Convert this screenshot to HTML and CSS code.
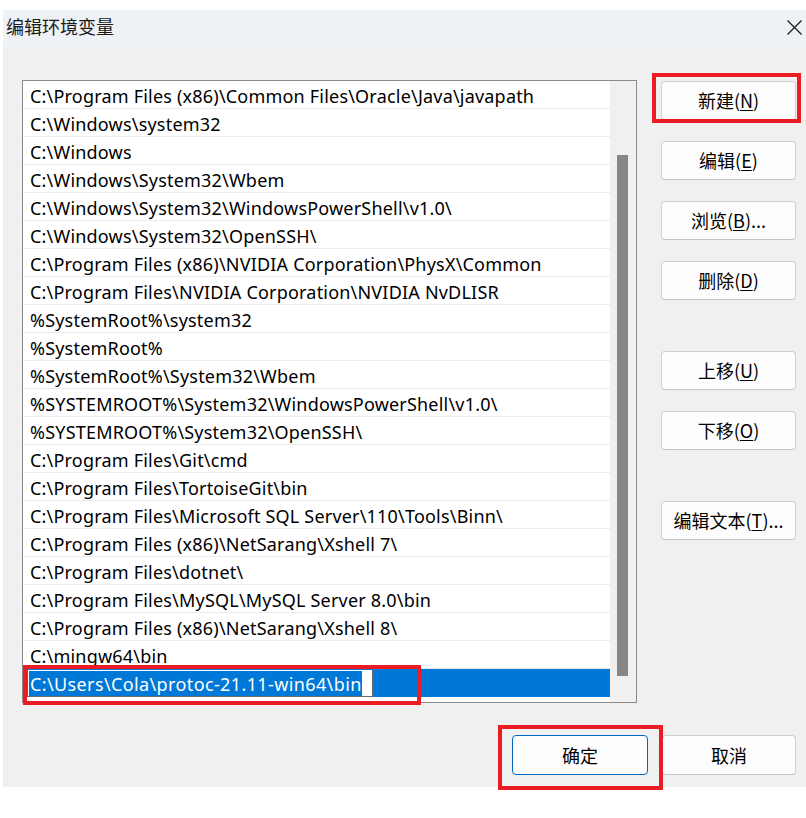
FILE: index.html
```html
<!DOCTYPE html>
<html lang="zh-CN">
<head>
<meta charset="utf-8">
<title>编辑环境变量</title>
<link rel="stylesheet" href="styles.css">
</head>
<body>
<div class="dialog">
  <div class="titlebar">
    <span class="title">编辑环境变量</span>
    <svg class="close" width="15" height="15" viewBox="0 0 15 15"><path d="M0.5 0.5 L14.5 14.5 M14.5 0.5 L0.5 14.5" stroke="#1a1a1a" stroke-width="1.3" fill="none"/></svg>
  </div>
  <div class="content">
    <div class="listbox">
      <div class="rows">
        <div class="row">C:\Program Files (x86)\Common Files\Oracle\Java\javapath</div>
        <div class="row">C:\Windows\system32</div>
        <div class="row">C:\Windows</div>
        <div class="row">C:\Windows\System32\Wbem</div>
        <div class="row">C:\Windows\System32\WindowsPowerShell\v1.0\</div>
        <div class="row">C:\Windows\System32\OpenSSH\</div>
        <div class="row">C:\Program Files (x86)\NVIDIA Corporation\PhysX\Common</div>
        <div class="row">C:\Program Files\NVIDIA Corporation\NVIDIA NvDLISR</div>
        <div class="row">%SystemRoot%\system32</div>
        <div class="row">%SystemRoot%</div>
        <div class="row">%SystemRoot%\System32\Wbem</div>
        <div class="row">%SYSTEMROOT%\System32\WindowsPowerShell\v1.0\</div>
        <div class="row">%SYSTEMROOT%\System32\OpenSSH\</div>
        <div class="row">C:\Program Files\Git\cmd</div>
        <div class="row">C:\Program Files\TortoiseGit\bin</div>
        <div class="row">C:\Program Files\Microsoft SQL Server\110\Tools\Binn\</div>
        <div class="row">C:\Program Files (x86)\NetSarang\Xshell 7\</div>
        <div class="row">C:\Program Files\dotnet\</div>
        <div class="row">C:\Program Files\MySQL\MySQL Server 8.0\bin</div>
        <div class="row">C:\Program Files (x86)\NetSarang\Xshell 8\</div>
        <div class="row">C:\mingw64\bin</div>
        <div class="row selected"><div class="edit"><span class="sel">C:\Users\Cola\protoc-21.11-win64\bin</span></div></div>
      </div>
      <div class="scrollbar"><div class="thumb"></div></div>
    </div>
    <div class="side">
      <button class="btn">新建(<u>N</u>)</button>
      <button class="btn">编辑(<u>E</u>)</button>
      <button class="btn">浏览(<u>B</u>)...</button>
      <button class="btn">删除(<u>D</u>)</button>
      <button class="btn group">上移(<u>U</u>)</button>
      <button class="btn">下移(<u>O</u>)</button>
      <button class="btn group">编辑文本(<u>T</u>)...</button>
    </div>
  </div>
  <div class="footer">
    <button class="btn ok">确定</button>
    <button class="btn cancel">取消</button>
  </div>
</div>
<div class="mark mark-new"></div>
<div class="mark mark-row"></div>
<div class="mark mark-ok"></div>
</body>
</html>
```
FILE: styles.css
```css
html, body {
  margin: 0;
  padding: 0;
  background: #ffffff;
}
body {
  position: relative;
  width: 806px;
  height: 818px;
  overflow: hidden;
  font-family: "Noto Sans", "Noto Sans CJK SC", sans-serif;
  color: #000;
}
.dialog {
  margin: 10px 0 0 3px;
  width: 803px;
  height: 777px;
  background: #f0f0f0;
  display: flex;
  flex-direction: column;
}
.titlebar {
  height: 40px;
  background: #eef2f7;
  display: flex;
  align-items: flex-start;
  justify-content: space-between;
  padding: 6px 4px 0 3px;
  box-sizing: border-box;
}
.title {
  font-family: "Noto Sans CJK SC", sans-serif;
  font-size: 18px;
  line-height: 20px;
  color: #1a1a1a;
}
.close {
  display: block;
  margin-top: 4px;
}
.content {
  display: flex;
  padding: 30px 0 0 19px;
  gap: 24px;
}
.listbox {
  width: 615px;
  height: 623px;
  border: 1px solid #8a8a8a;
  box-sizing: border-box;
  background: #ffffff;
  display: flex;
}
.rows {
  width: 587px;
  display: flex;
  flex-direction: column;
}
.row {
  height: 28px;
  line-height: 31px;
  box-sizing: border-box;
  border-bottom: 1px solid #ececec;
  padding-left: 7px;
  font-size: 18px;
  letter-spacing: 0.2px;
  white-space: nowrap;
  overflow: hidden;
}
.row.selected {
  background: #0078d7;
  border-bottom: none;
  padding-left: 5px;
}
.edit {
  margin-top: 1px;
  width: 345px;
  height: 27px;
  box-sizing: border-box;
  background: #ffffff;
  border-right: 1px solid #6a6a6a;
  border-bottom: 1px solid #6a6a6a;
  padding: 1px 0 0 1px;
}
.sel {
  display: inline-block;
  vertical-align: top;
  background: #0078d7;
  color: #ffffff;
  height: 25px;
  line-height: 26px;
  padding-left: 1px;
  letter-spacing: 0.38px;
}
.scrollbar {
  width: 26px;
  background: #f0f0f0;
  padding: 74px 0 0 7px;
  box-sizing: border-box;
}
.thumb {
  width: 11px;
  height: 521px;
  background: #878787;
}
.side {
  display: flex;
  flex-direction: column;
  padding-top: 1px;
  gap: 21px;
}
.btn {
  font-family: "Noto Sans CJK SC", sans-serif;
  font-size: 18px;
  color: #000;
  background: #fdfdfd;
  border: 1px solid #d0d0d0;
  border-bottom-color: #c4c4c4;
  border-radius: 4px;
  width: 135px;
  height: 39px;
  padding: 0;
  box-sizing: border-box;
  line-height: 37px;
}
.btn u {
  text-underline-offset: 2px;
  text-decoration-thickness: 1px;
}
.side .group {
  margin-top: 30px;
}
.footer {
  display: flex;
  justify-content: flex-end;
  gap: 14px;
  padding: 32px 10px 0 0;
}
.btn.ok {
  width: 136px;
  height: 40px;
  border-color: #0067c0;
}
.btn.cancel {
  width: 134px;
  height: 40px;
}
.mark {
  position: absolute;
  border: 4px solid #ec1c24;
  box-sizing: border-box;
}
.mark-new {
  left: 652px;
  top: 73px;
  width: 149px;
  height: 50px;
}
.mark-row {
  left: 23px;
  top: 665px;
  width: 398px;
  height: 40px;
}
.mark-ok {
  left: 498px;
  top: 725px;
  width: 165px;
  height: 65px;
}
```
